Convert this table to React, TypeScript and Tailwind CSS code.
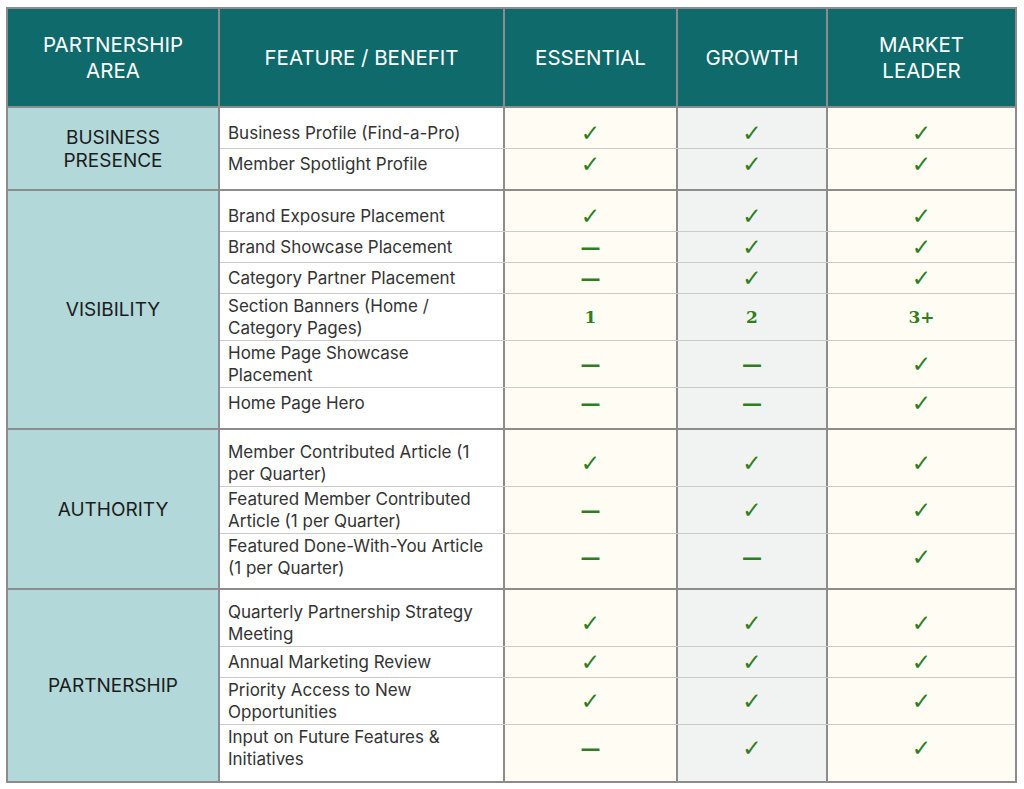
import React from "react";

type V = "c" | "d" | string;
type Row = { f: string[]; v: [V, V, V] };
type Section = { label: string[]; rows: Row[]; tight?: boolean };

const sections: Section[] = [
  {
    label: ["BUSINESS", "PRESENCE"],
    rows: [
      { f: ["Business Profile (Find-a-Pro)"], v: ["c", "c", "c"] },
      { f: ["Member Spotlight Profile"], v: ["c", "c", "c"] },
    ],
  },
  {
    label: ["VISIBILITY"],
    rows: [
      { f: ["Brand Exposure Placement"], v: ["c", "c", "c"] },
      { f: ["Brand Showcase Placement"], v: ["d", "c", "c"] },
      { f: ["Category Partner Placement"], v: ["d", "c", "c"] },
      { f: ["Section Banners (Home /", "Category Pages)"], v: ["1", "2", "3+"] },
      { f: ["Home Page Showcase", "Placement"], v: ["d", "d", "c"] },
      { f: ["Home Page Hero"], v: ["d", "d", "c"] },
    ],
  },
  {
    label: ["AUTHORITY"],
    tight: true,
    rows: [
      { f: ["Member Contributed Article (1", "per Quarter)"], v: ["c", "c", "c"] },
      { f: ["Featured Member Contributed", "Article (1 per Quarter)"], v: ["d", "c", "c"] },
      { f: ["Featured Done-With-You Article", "(1 per Quarter)"], v: ["d", "d", "c"] },
    ],
  },
  {
    label: ["PARTNERSHIP"],
    rows: [
      { f: ["Quarterly Partnership Strategy", "Meeting"], v: ["c", "c", "c"] },
      { f: ["Annual Marketing Review"], v: ["c", "c", "c"] },
      { f: ["Priority Access to New", "Opportunities"], v: ["c", "c", "c"] },
      { f: ["Input on Future Features &", "Initiatives"], v: ["d", "c", "c"] },
    ],
  },
];

function Val({ v }: { v: V }) {
  if (v === "c")
    return (
      <span className="text-[23px] leading-none text-[#2f7d1f] [font-family:'DejaVu_Sans',sans-serif]">
        ✓
      </span>
    );
  if (v === "d")
    return (
      <span className="text-[20px] leading-none font-bold text-[#2f7d1f] [font-family:'DejaVu_Sans',sans-serif]">
        —
      </span>
    );
  return (
    <span className="text-[17px] leading-none font-bold text-[#2f7d1f] [font-family:'DejaVu_Serif',serif]">
      {v}
    </span>
  );
}

export default function App() {
  return (
    <div className="w-[1024px] h-[789px] bg-white pt-[7px] pl-[6px] [font-family:Inter,'Liberation_Sans',sans-serif]">
      <div className="w-[1011px] border-2 border-[#8c8c8c] flex flex-col">
        {/* Header */}
        <div className="flex h-[99px] bg-[#0f6a6b] text-white text-[20.5px] leading-[26px] border-b-2 border-[#8c8c8c]">
          <div className="w-[212px] shrink-0 border-r-2 border-[#8c8c8c] flex flex-col items-center justify-center text-center">
            <span>PARTNERSHIP</span>
            <span>AREA</span>
          </div>
          <div className="w-[285px] shrink-0 border-r-2 border-[#8c8c8c] flex items-center justify-center">
            FEATURE / BENEFIT
          </div>
          <div className="w-[173px] shrink-0 border-r-2 border-[#8c8c8c] flex items-center justify-center">
            ESSENTIAL
          </div>
          <div className="w-[150px] shrink-0 border-r-2 border-[#8c8c8c] flex items-center justify-center">
            GROWTH
          </div>
          <div className="flex-1 flex flex-col items-center justify-center text-center">
            <span>MARKET</span>
            <span>LEADER</span>
          </div>
        </div>

        {sections.map((s, si) => (
          <div
            key={si}
            className={`flex ${si < sections.length - 1 ? "border-b-2 border-[#8c8c8c]" : ""}`}
          >
            <div className="w-[212px] shrink-0 bg-[#b2d8d9] border-r-2 border-[#8c8c8c] flex flex-col items-center justify-center text-center text-[19px] leading-[23px] text-[#1c1c1c]">
              {s.label.map((l, i) => (
                <span key={i}>{l}</span>
              ))}
            </div>
            <div className="flex-1 flex flex-col">
              {s.rows.map((r, ri) => {
                const first = ri === 0;
                const last = ri === s.rows.length - 1;
                const pad = `${first ? "pt-[10px]" : "pt-0"} ${
                  last ? (s.tight ? "pb-[8px]" : "pb-[10px]") : "pb-0"
                }`;
                return (
                  <div
                    key={ri}
                    className={`flex ${!last ? "border-b border-[#cbcbcb]" : ""}`}
                  >
                    <div
                      className={`w-[285px] shrink-0 bg-white border-r-2 border-[#8c8c8c] pl-[8px] ${pad} flex items-center`}
                    >
                      <div className="min-h-[30px] py-[1px] flex flex-col justify-center text-[17px] leading-[22px] text-[#333333]">
                        {r.f.map((t, i) => (
                          <span key={i} className="whitespace-nowrap">
                            {t}
                          </span>
                        ))}
                      </div>
                    </div>
                    <div
                      className={`w-[173px] shrink-0 bg-[#fffcf3] border-r-2 border-[#8c8c8c] ${pad} flex items-center justify-center`}
                    >
                      <Val v={r.v[0]} />
                    </div>
                    <div
                      className={`w-[150px] shrink-0 bg-[#f1f2f2] border-r-2 border-[#8c8c8c] ${pad} flex items-center justify-center`}
                    >
                      <Val v={r.v[1]} />
                    </div>
                    <div
                      className={`flex-1 bg-[#fffcf3] ${pad} flex items-center justify-center`}
                    >
                      <Val v={r.v[2]} />
                    </div>
                  </div>
                );
              })}
            </div>
          </div>
        ))}
      </div>
    </div>
  );
}
